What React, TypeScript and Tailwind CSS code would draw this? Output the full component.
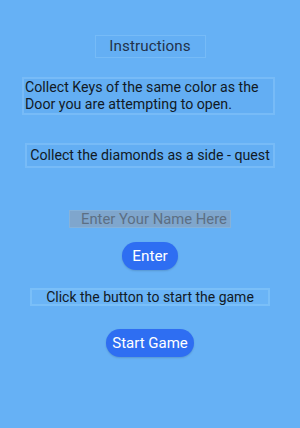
export default function App() {
  return (
    <div
      className="w-[300px] h-[428px] bg-[#66b1f5] flex flex-col items-center text-[#1a2230]"
      style={{ fontFamily: "Roboto, 'Noto Sans', sans-serif" }}
    >
      <div className="mt-[35px] w-[111px] h-[23px] flex items-center justify-center border border-[#76bbf7] bg-[#64aff4] text-[15.2px] text-[#22324a] tracking-[0.1px]">
        Instructions
      </div>

      <div className="mt-[19px] self-start ml-[22px] w-[253px] h-[38px] border-2 border-[#77bbf7] bg-[#63aef3] px-[1px] text-[14.2px] leading-[17px] text-[#111a26]">
        Collect Keys of the same color as the Door you are attempting to open.
      </div>

      <div className="mt-[28px] self-start ml-[25px] w-[250px] h-[25px] flex items-center justify-center border-2 border-[#77bbf7] bg-[#63aef3] text-[14.2px] text-[#111a26]">
        Collect the diamonds as a side - quest
      </div>

      <div className="mt-[42px] w-[162px] h-[18px] flex items-center pl-[11px] bg-[#7fa6cd] border border-[#86b2d9] text-[14.8px] text-[#5c6f84] whitespace-nowrap">
        Enter Your Name Here
      </div>

      <button className="mt-[14px] w-[56px] h-[28px] rounded-full bg-[#2e6ef2] text-white text-[15.3px] shadow-[0_1px_2px_rgba(0,0,0,0.15)]">
        Enter
      </button>

      <div className="mt-[18px] w-[240px] h-[18px] flex items-center justify-center border-2 border-[#7abff8] bg-[#6ab4f6] text-[14px] text-[#111a26]">
        Click the button to start the game
      </div>

      <button className="mt-[23px] w-[88px] h-[28px] rounded-full bg-[#2e6ef2] text-white text-[15px] shadow-[0_1px_2px_rgba(0,0,0,0.15)]">
        Start Game
      </button>
    </div>
  );
}
